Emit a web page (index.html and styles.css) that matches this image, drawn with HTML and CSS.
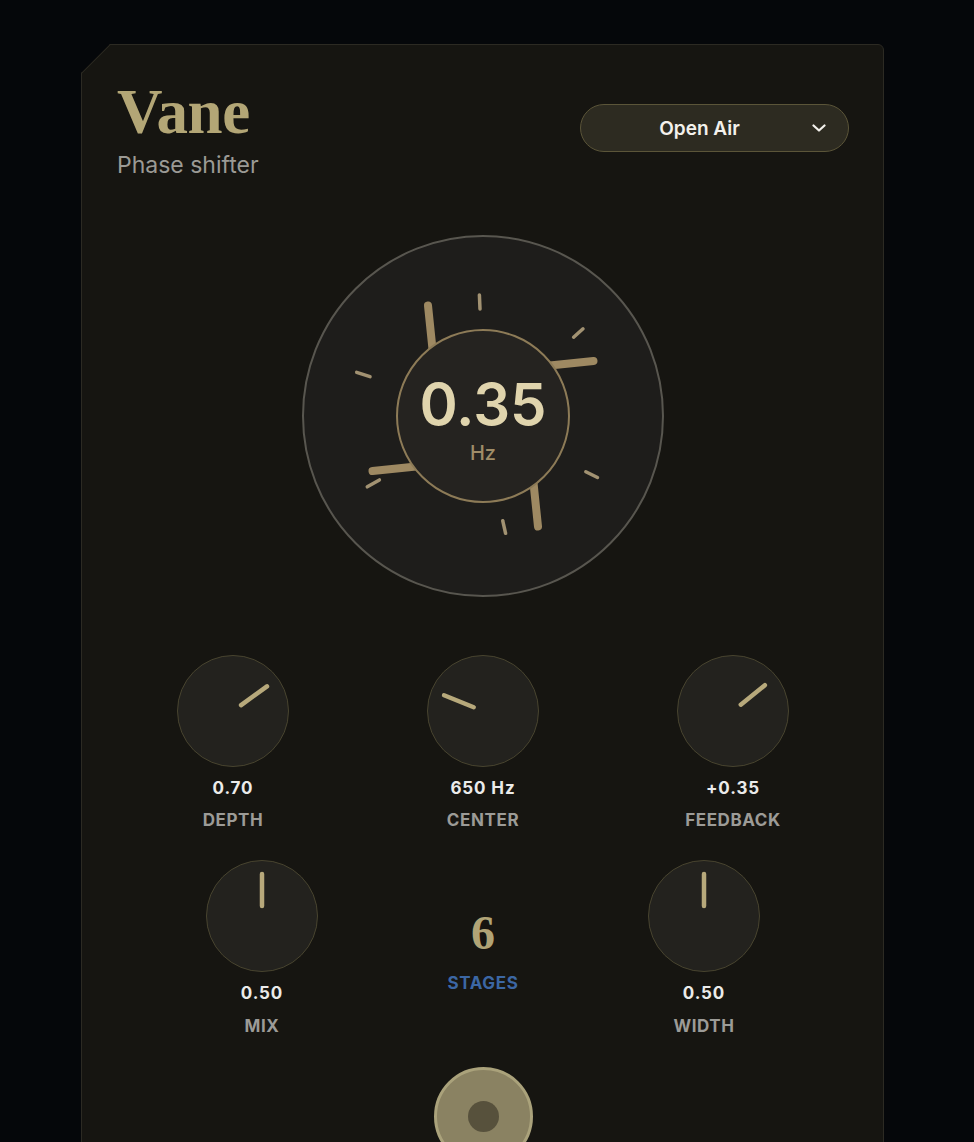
FILE: index.html
```html
<!DOCTYPE html>
<html lang="en">
<head>
<meta charset="utf-8">
<title>Vane — Phase shifter</title>
<link rel="stylesheet" href="styles.css">
</head>
<body>
<div class="panel">
  <header class="head">
    <div class="brand">
      <h1 class="title">Vane</h1>
      <div class="subtitle">Phase shifter</div>
    </div>
    <button class="preset" type="button">
      <span class="preset-name">Open Air</span>
      <svg class="chev" width="14" height="8" viewBox="0 0 14 8"><path d="M1.5 1.5 L7 6.5 L12.5 1.5"/></svg>
    </button>
  </header>

  <div class="dial-wrap">
    <div class="dial">
      <svg class="ticks" viewBox="-179 -179 358 358">
        <g class="vanes">
          <line x1="-50" y1="-62" x2="-55" y2="-110.5"/>
          <line x1="-50" y1="-62" x2="-55" y2="-110.5" transform="rotate(90)"/>
          <line x1="-50" y1="-62" x2="-55" y2="-110.5" transform="rotate(180)"/>
          <line x1="-50" y1="-62" x2="-55" y2="-110.5" transform="rotate(270)"/>
        </g>
        <g class="marks">
          <line x1="-3" y1="-107" x2="-3.6" y2="-121"/>
          <line x1="90.6" y1="-78.8" x2="100" y2="-87.2"/>
          <line x1="-113" y1="-39.3" x2="-126.3" y2="-43.7"/>
          <line x1="102.8" y1="55.8" x2="114.5" y2="61.5"/>
          <line x1="-103.6" y1="63.9" x2="-115.7" y2="70.8"/>
          <line x1="19.7" y1="104.7" x2="22.6" y2="117.3"/>
        </g>
      </svg>
      <div class="hub">
        <div class="rate">0.35</div>
        <div class="unit">Hz</div>
      </div>
    </div>
  </div>

  <div class="row row-a">
    <div class="ctl">
      <div class="knob"><svg viewBox="-55 -55 110 110"><line x1="0" y1="-10" x2="0" y2="-42" transform="rotate(54)"/></svg></div>
      <div class="val">0.70</div>
      <div class="lbl">DEPTH</div>
    </div>
    <div class="ctl">
      <div class="knob"><svg viewBox="-55 -55 110 110"><line x1="0" y1="-10" x2="0" y2="-42" transform="rotate(-68)"/></svg></div>
      <div class="val">650 Hz</div>
      <div class="lbl">CENTER</div>
    </div>
    <div class="ctl">
      <div class="knob"><svg viewBox="-55 -55 110 110"><line x1="0" y1="-10" x2="0" y2="-41" transform="rotate(51)"/></svg></div>
      <div class="val">+0.35</div>
      <div class="lbl">FEEDBACK</div>
    </div>
  </div>

  <div class="row row-b">
    <div class="ctl">
      <div class="knob"><svg viewBox="-55 -55 110 110"><line x1="0" y1="-10" x2="0" y2="-42"/></svg></div>
      <div class="val">0.50</div>
      <div class="lbl">MIX</div>
    </div>
    <div class="ctl stages">
      <div class="stage-num">6</div>
      <div class="stage-lbl">STAGES</div>
    </div>
    <div class="ctl">
      <div class="knob"><svg viewBox="-55 -55 110 110"><line x1="0" y1="-10" x2="0" y2="-42"/></svg></div>
      <div class="val">0.50</div>
      <div class="lbl">WIDTH</div>
    </div>
  </div>

  <div class="bypass-wrap">
    <button class="bypass" type="button" aria-label="Bypass"><span class="dot"></span></button>
  </div>
</div>
</body>
</html>
```

FILE: styles.css
```css
* { box-sizing: border-box; }

html, body {
  margin: 0;
  padding: 0;
  background: #05070a;
}

body {
  font-family: Inter, "Noto Sans", "Liberation Sans", sans-serif;
  color: #e8e8e8;
}

.panel {
  position: relative;
  width: 803px;
  margin: 44px 0 0 81px;
  padding: 36px 34px 60px 35px;
  background: #161511;
  border: 1px solid #2c2a23;
  border-top-right-radius: 6px;
  clip-path: polygon(29px 0, 100% 0, 100% 100%, 0 100%, 0 29px);
}

.panel::before {
  content: "";
  position: absolute;
  left: -1px;
  top: 28px;
  width: 41.5px;
  height: 1px;
  background: #2c2a23;
  transform-origin: 0 0;
  transform: rotate(-45deg);
}

/* header */
.head {
  display: flex;
  justify-content: space-between;
  align-items: flex-start;
}

.title {
  margin: 0;
  font-family: "Liberation Serif", "DejaVu Serif", serif;
  font-weight: 700;
  font-size: 63px;
  line-height: 1;
  letter-spacing: -0.3px;
  color: #b3a676;
}

.subtitle {
  margin-top: 8px;
  font-size: 23px;
  line-height: 1.2;
  color: #9b9a95;
}

.preset {
  margin-top: 23px;
  width: 269px;
  height: 48px;
  display: flex;
  align-items: center;
  padding: 0 22px 0 20px;
  background: #2d2b21;
  border: 1.5px solid #5b5539;
  border-radius: 24px;
  font-family: inherit;
  cursor: pointer;
}

.preset-name {
  flex: 1;
  text-align: center;
  font-size: 19px;
  font-weight: 600;
  color: #f3f1ec;
}

.chev {
  margin-left: 14px;
  flex: none;
}

.chev path {
  fill: none;
  stroke: #f3f1ec;
  stroke-width: 2.2;
  stroke-linecap: round;
  stroke-linejoin: round;
}

/* main rate dial */
.dial-wrap {
  display: flex;
  justify-content: center;
  margin-top: 55px;
}

.dial {
  width: 362px;
  height: 362px;
  border-radius: 50%;
  border: 2px solid #58564f;
  background: #1e1d1b;
  display: grid;
  place-items: center;
}

.ticks, .hub {
  grid-area: 1 / 1;
}

.ticks {
  width: 358px;
  height: 358px;
}

.vanes line {
  stroke: #9e8962;
  stroke-width: 8;
  stroke-linecap: round;
}

.marks line {
  stroke: #a29272;
  stroke-width: 3.5;
  stroke-linecap: round;
}

.hub {
  width: 174px;
  height: 174px;
  border-radius: 50%;
  border: 2.5px solid #8d7b57;
  background: #252320;
  display: flex;
  flex-direction: column;
  align-items: center;
  justify-content: center;
  padding-top: 7px;
}

.rate {
  font-size: 58px;
  font-weight: 600;
  line-height: 1;
  color: #e0d4ad;
}

.unit {
  margin-top: 10px;
  font-size: 20px;
  font-weight: 500;
  line-height: 1;
  color: #a08d68;
}

/* knob rows */
.row {
  display: grid;
  justify-content: center;
}

.row-a {
  grid-template-columns: repeat(3, 250px);
  margin-top: 58px;
}

.row-b {
  grid-template-columns: repeat(3, 221px);
  margin-top: 30px;
}

.ctl {
  display: flex;
  flex-direction: column;
  align-items: center;
}

.knob {
  width: 112px;
  height: 112px;
  border-radius: 50%;
  border: 1.5px solid #48442f;
  background: #23221e;
}

.knob svg {
  display: block;
  width: 100%;
  height: 100%;
}

.knob line {
  stroke: #b7a97b;
  stroke-width: 4.5;
  stroke-linecap: round;
}

.val {
  margin-top: 11px;
  font-size: 17px;
  font-weight: 700;
  line-height: 1.2;
  letter-spacing: 0.9px;
  color: #ebebea;
}

.lbl {
  margin-top: 12px;
  font-size: 17px;
  font-weight: 700;
  line-height: 1.2;
  letter-spacing: 0.6px;
  color: #9c9b97;
}

.stage-num {
  margin-top: 49px;
  font-family: "Liberation Serif", "DejaVu Serif", serif;
  font-weight: 700;
  font-size: 48px;
  line-height: 1;
  color: #b1a476;
}

.stage-lbl {
  margin-top: 16px;
  font-size: 17px;
  font-weight: 700;
  line-height: 1.2;
  letter-spacing: 0.6px;
  color: #3c67a4;
}

/* bypass button */
.bypass-wrap {
  display: flex;
  justify-content: center;
  margin-top: 31px;
}

.bypass {
  width: 99px;
  height: 99px;
  border-radius: 50%;
  border: 3px solid #aaa27b;
  background: #8a8262;
  display: flex;
  align-items: center;
  justify-content: center;
  padding: 0;
  cursor: pointer;
}

.dot {
  width: 31px;
  height: 31px;
  border-radius: 50%;
  background: #57513c;
}
```
